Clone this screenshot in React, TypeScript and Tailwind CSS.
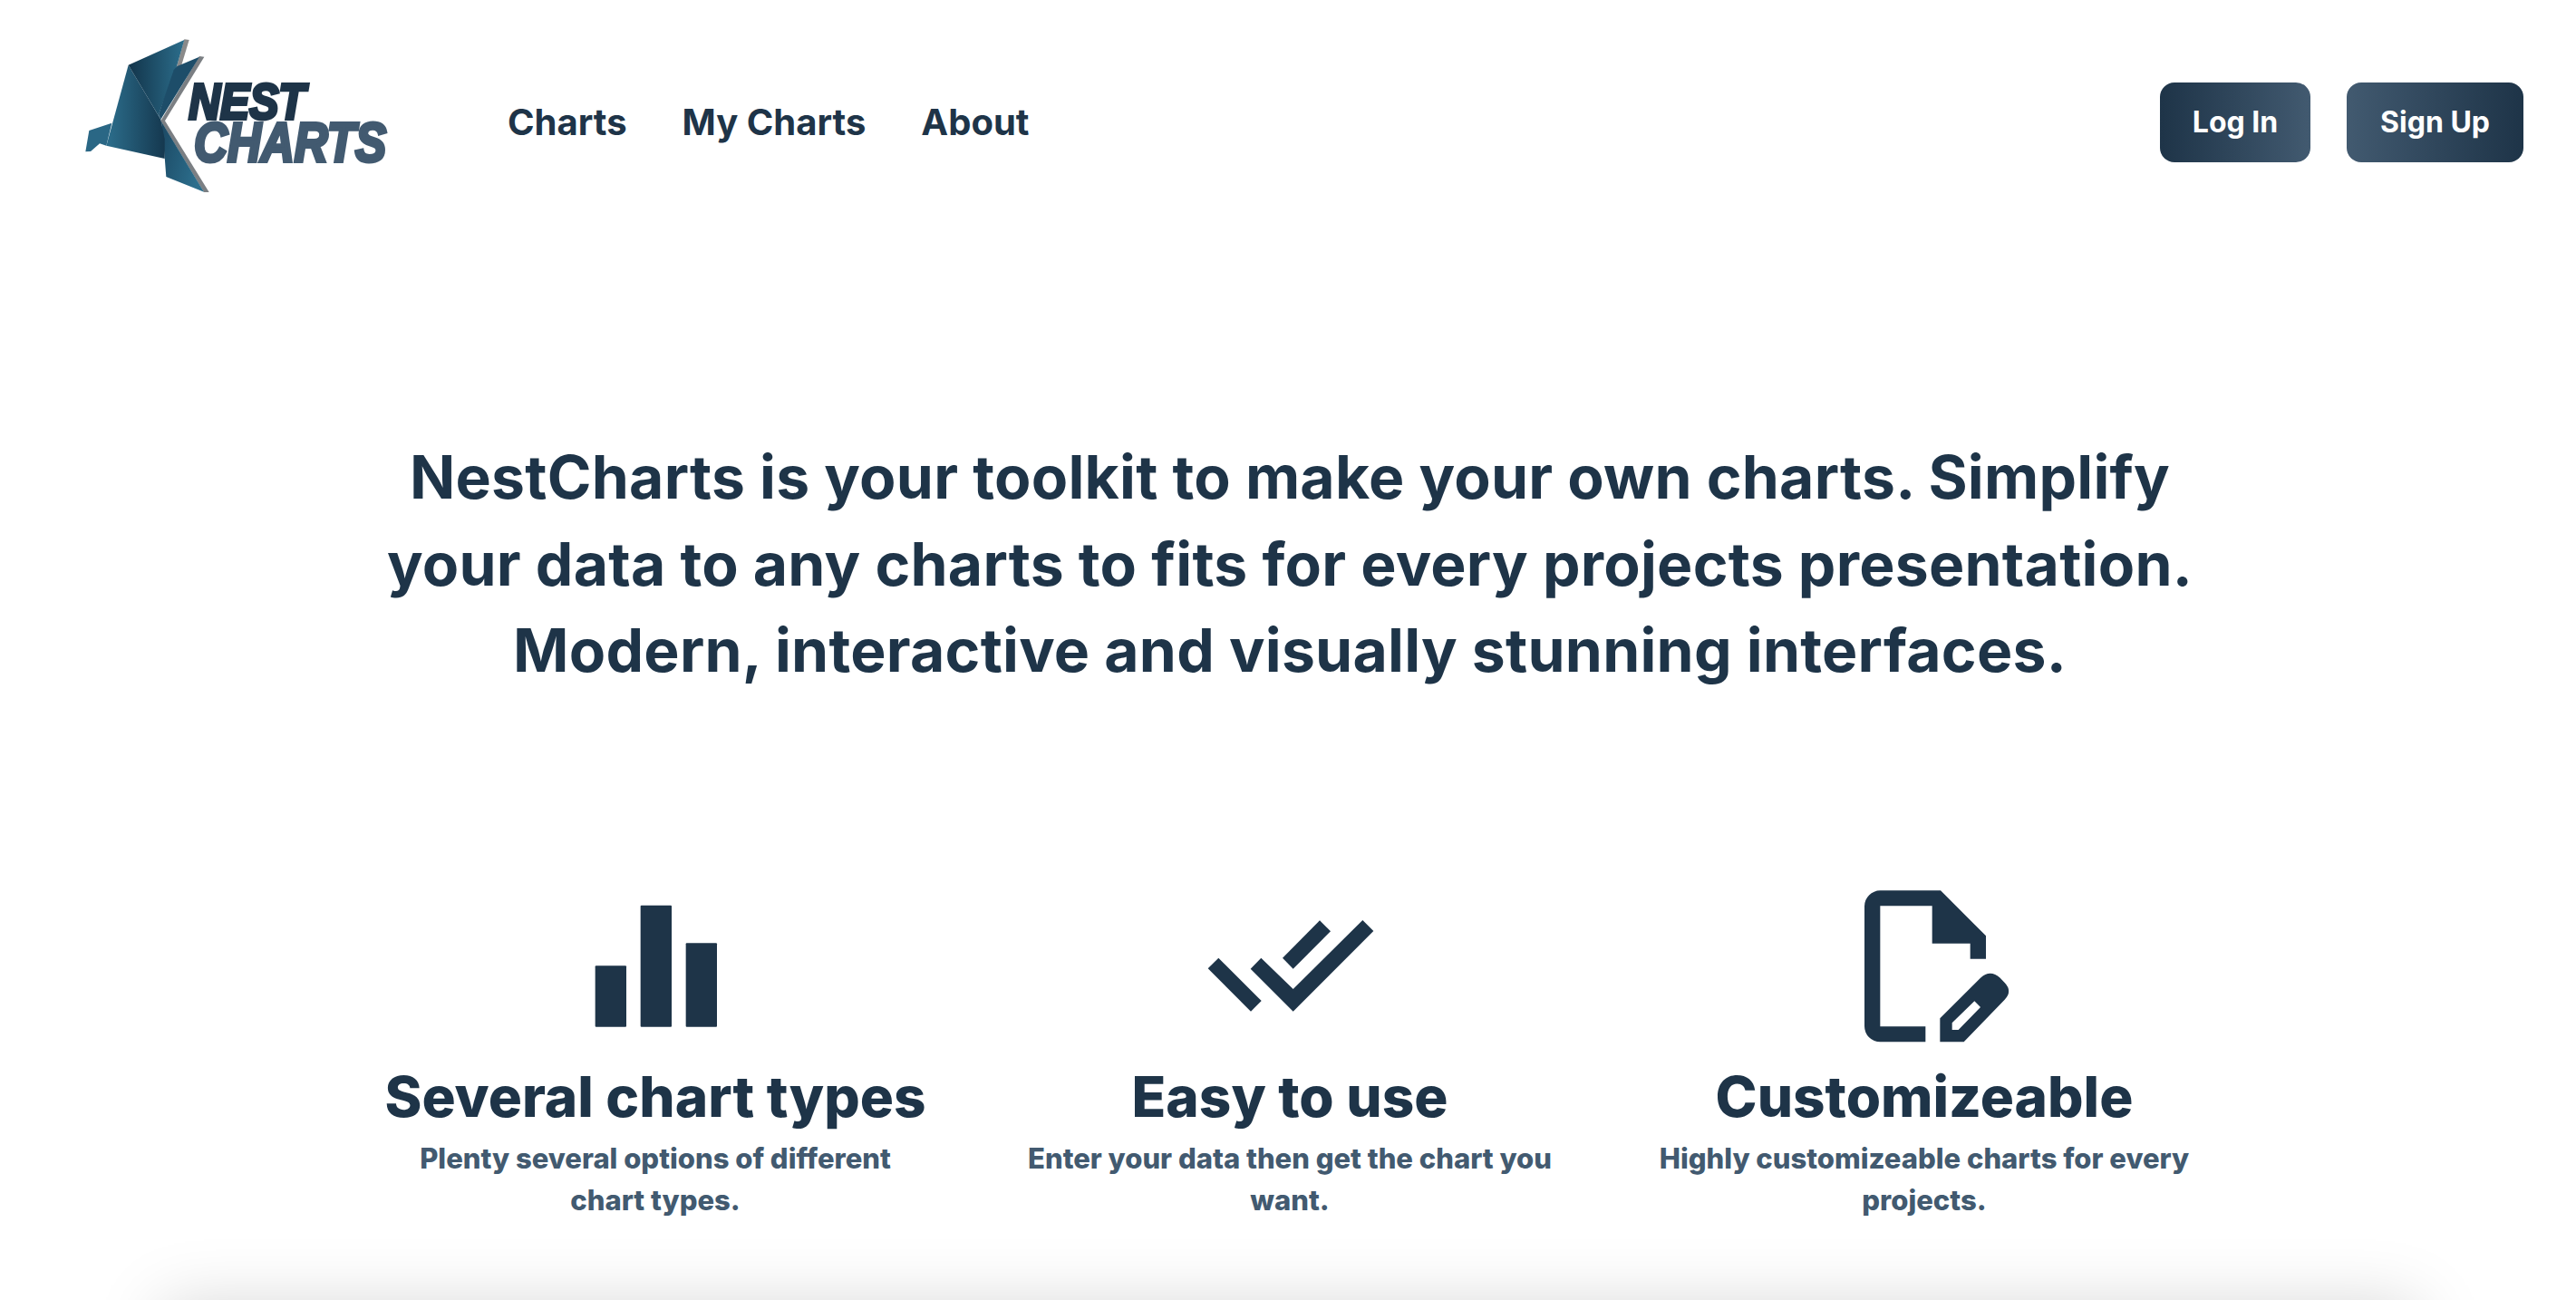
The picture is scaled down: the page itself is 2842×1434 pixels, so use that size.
import { Fragment } from 'react';

const features = [
  {
    title: 'Several chart types',
    lines: ['Plenty several options of different', 'chart types.'],
    icon: (
      <svg viewBox="9 0 600 600" className="w-[200px] h-[200px]" fill="#1e3448">
        <rect x="110" y="316" width="103" height="202" rx="3" />
        <rect x="260" y="116" width="103" height="402" rx="3" />
        <rect x="410" y="241" width="103" height="277" rx="3" />
      </svg>
    ),
  },
  {
    title: 'Easy to use',
    lines: ['Enter your data then get the chart you', 'want.'],
    icon: (
      <svg viewBox="39 -90 600 600" className="w-[200px] h-[200px]" fill="#1e3448">
        <polygon points="68,235 103,200 245,342 210,377" />
        <polygon points="209,236 244,200 350,303 580,75 616,111 350,377" />
        <polygon points="315,200 438,76 474,112 350,236" />
      </svg>
    ),
  },
  {
    title: 'Customizeable',
    lines: ['Highly customizeable charts for every', 'projects.'],
    icon: (
      <svg viewBox="-21 0 600 600" className="w-[200px] h-[200px]" fill="#1e3448" fillRule="evenodd">
        <path d="M133 67H333L483 217V293H431V242H305V118H133V517H283V568H133A52 52 0 0 1 81 516V119A52 52 0 0 1 133 67Z" />
        <path d="M331 490L465 356Q497 326 530 356L545 372Q572 400 545 428L410 568H331ZM371 505V528H392L465 453L445 433Z" />
      </svg>
    ),
  },
];

const Logo = () => (
  <svg viewBox="0 0 1200 660" className="w-[400px] h-[220px] shrink-0 mb-[10px] overflow-visible">
    <defs>
      <linearGradient id="wing" x1="0" y1="0" x2="1" y2="0">
        <stop offset="0" stopColor="#12344a" />
        <stop offset="1" stopColor="#2c6e8c" />
      </linearGradient>
      <linearGradient id="body" x1="0" y1="0" x2="1" y2="0">
        <stop offset="0" stopColor="#2c6e8c" />
        <stop offset="1" stopColor="#15384f" />
      </linearGradient>
      <linearGradient id="lower" x1="0" y1="0" x2="1" y2="0.4">
        <stop offset="0" stopColor="#1b4863" />
        <stop offset="1" stopColor="#2c6e8c" />
      </linearGradient>
    </defs>
    <polygon points="430,70 446,72 420,158 405,160" fill="#8a8a8a" />
    <polygon points="480,126 496,128 366,340 512,576 495,576 352,340" fill="#7b7f83" />
    <polygon points="115,372 190,347 172,422 150,415 120,441 103,442" fill="#2a6785" />
    <polygon points="354,342 495,575 370,525 365,460" fill="url(#lower)" />
    <polygon points="245,155 172,422 365,465 365,400 352,335" fill="url(#body)" />
    <polygon points="245,155 430,72 405,160 345,318 352,335" fill="url(#wing)" />
    <polygon points="405,160 480,128 352,335 345,318 395,172" fill="#1d4d69" />
    <text x="445" y="332" textLength="385" lengthAdjust="spacingAndGlyphs" fontFamily="'Liberation Sans', sans-serif" fontWeight="700" fontStyle="italic" fontSize="168" fill="#1e3448" stroke="#1e3448" strokeWidth="12">
      NEST
    </text>
    <text x="462" y="474" textLength="636" lengthAdjust="spacingAndGlyphs" fontFamily="'Liberation Sans', sans-serif" fontWeight="700" fontStyle="italic" fontSize="182" fill="#425a70" stroke="#425a70" strokeWidth="12">
      CHARTS
    </text>
  </svg>
);

const App = () => {
  return (
    <div className="h-screen overflow-hidden bg-white font-['Inter',sans-serif] text-[#1e3448]">
      <header className="flex items-center h-[270px] pl-[60px] pr-[58px]">
        <Logo />
        <nav className="flex items-center gap-[61px] ml-[100px] text-[40px] font-bold">
          <a>Charts</a>
          <a>My Charts</a>
          <a>About</a>
        </nav>
        <div className="ml-auto flex items-center gap-[40px] text-[32px] font-bold text-white">
          <button className="w-[166px] h-[88px] rounded-[16px] bg-gradient-to-r from-[#1e3448] to-[#425a70]">Log In</button>
          <button className="w-[195px] h-[88px] rounded-[16px] bg-gradient-to-r from-[#425a70] to-[#1e3448]">Sign Up</button>
        </div>
      </header>

      <main className="pl-[4px]">
        <h1 className="mt-[209px] text-center text-[66px] leading-[95.5px] font-[650] tracking-[0.25px]">
          NestCharts is your toolkit to make your own charts. Simplify
          <br />
          your data to any charts to fits for every projects presentation.
          <br />
          Modern, interactive and visually stunning interfaces.
        </h1>

        <section className="mt-[194px] mx-auto w-[2100px] grid grid-cols-3">
          {features.map((feature) => (
            <div key={feature.title} className="flex flex-col items-center text-center">
              {feature.icon}
              <h2 className="mt-[10px] text-[62px] leading-[80px] font-extrabold">{feature.title}</h2>
              <p className="mt-[5px] text-[31px] leading-[46px] font-extrabold text-[#425a70]">
                {feature.lines.map((line, i) => (
                  <Fragment key={i}>
                    {i > 0 && <br />}
                    {line}
                  </Fragment>
                ))}
              </p>
            </div>
          ))}
        </section>

        <div className="mt-[93px] mx-[175px] h-[300px] bg-white shadow-[0_0_70px_rgba(0,0,0,0.17)]" />
      </main>
    </div>
  );
};

export default App;
